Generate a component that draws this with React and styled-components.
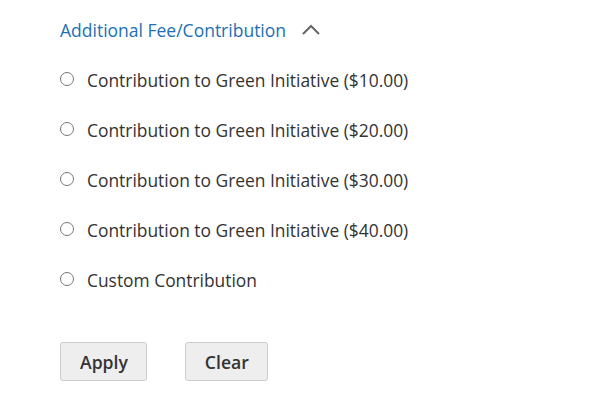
import styled, { createGlobalStyle } from 'styled-components';

const GlobalStyle = createGlobalStyle`
  body {
    margin: 0;
    background: #ffffff;
    font-family: "Open Sans", "DejaVu Sans", sans-serif;
    color: #333333;
  }
`;

const Panel = styled.div`
  padding: 17px 0 0 60px;
`;

const Heading = styled.div`
  display: flex;
  align-items: center;
  gap: 15px;
  font-size: 17.5px;
  line-height: 26px;
  color: #2270b3;
  margin-bottom: 25px;
`;

const Options = styled.div`
  display: flex;
  flex-direction: column;
  gap: 25px;
`;

const Option = styled.label`
  display: flex;
  align-items: center;
  gap: 13px;
  font-size: 17.4px;
  line-height: 25px;
  color: #333333;
`;

const Radio = styled.input`
  width: 14px;
  height: 14px;
  margin: 0 0 4px 0;
  accent-color: #555555;
`;

const Actions = styled.div`
  display: flex;
  gap: 38px;
  margin-top: 49px;
`;

const Button = styled.button`
  height: 39px;
  padding: 0 18px 0 19px;
  font-family: "Open Sans", "DejaVu Sans", sans-serif;
  font-size: 17.6px;
  font-weight: 600;
  color: #333333;
  background: #eeeeee;
  border: 1px solid #cdcdcd;
  border-radius: 3px;
`;

const options = [
  'Contribution to Green Initiative ($10.00)',
  'Contribution to Green Initiative ($20.00)',
  'Contribution to Green Initiative ($30.00)',
  'Contribution to Green Initiative ($40.00)',
  'Custom Contribution',
];

export default function App() {
  return (
    <>
      <GlobalStyle />
      <Panel>
        <Heading>
          Additional Fee/Contribution
          <svg width="20" height="12" viewBox="0 0 20 12">
            <path d="M2 10 L10 2 L18 10" fill="none" stroke="#666" strokeWidth="2" />
          </svg>
        </Heading>
        <Options>
          {options.map((o) => (
            <Option key={o}>
              <Radio type="radio" name="fee" />
              {o}
            </Option>
          ))}
        </Options>
        <Actions>
          <Button>Apply</Button>
          <Button>Clear</Button>
        </Actions>
      </Panel>
    </>
  );
}
